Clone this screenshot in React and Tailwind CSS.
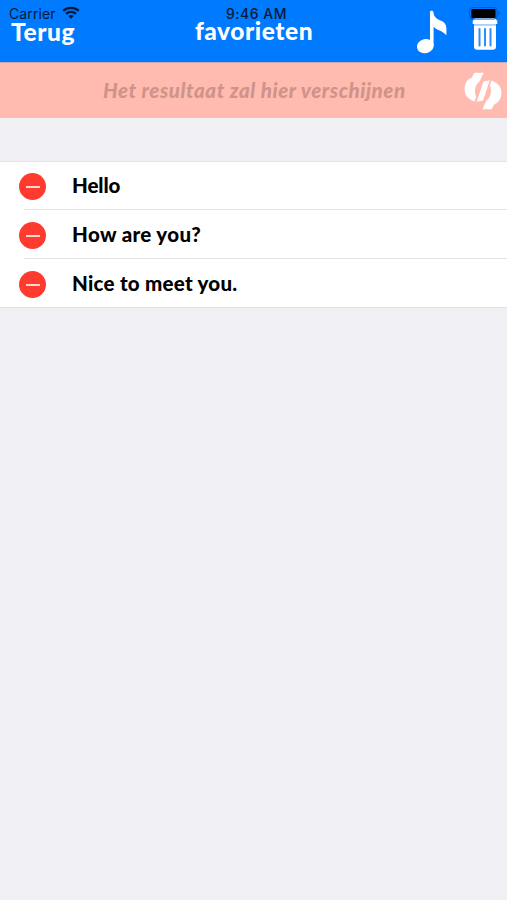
import React from 'react';

const phrases = [
  { text: 'Hello', spacing: 'tracking-[-0.1px]' },
  { text: 'How are you?', spacing: 'tracking-[0.35px]' },
  { text: 'Nice to meet you.', spacing: 'tracking-[0.25px]' },
];

const WifiIcon = () => (
  <svg width="18" height="13" viewBox="0 0 18 13" fill="none" stroke="#051a38" strokeWidth="2.3">
    <path d="M1.2 4.8C5.5 0.8 12.5 0.8 16.8 4.8" />
    <path d="M4 7.8C6.8 5.2 11.2 5.2 14 7.8" />
    <path d="M6.3 10C7.8 8.6 10.2 8.6 11.7 10L9 12.8Z" fill="#051a38" stroke="none" />
  </svg>
);

const BatteryIcon = () => (
  <svg width="32" height="13" viewBox="0 0 32 13">
    <rect x="0.5" y="0.5" width="27.5" height="11.5" rx="3" fill="none" stroke="#0559b5" />
    <rect x="2.3" y="2" width="24.2" height="9" rx="1" fill="#000" />
    <path d="M29.5 4.3C31 5 31 7.8 29.5 8.5Z" fill="#0559b5" />
  </svg>
);

const NoteIcon = () => (
  <svg width="32" height="44" viewBox="0 0 32 44" fill="#fff">
    <ellipse cx="9.3" cy="36.2" rx="8.4" ry="7" transform="rotate(-12 9.3 36.2)" />
    <path d="M14 2C14 0.3 17 0.3 17.4 2C18 7 20.4 9 25 10.8C30 13 31 15.5 30.3 25.6C27.6 21 22.4 21 17.6 17V36H14Z" />
  </svg>
);

const TrashIcon = () => (
  <svg width="26" height="34" viewBox="0 0 26 34">
    <path d="M3 1H23L25.3 4V7H0.7V4Z" fill="#fff" />
    <path d="M2 8.3H24V29.5Q24 32.8 20.7 32.8H5.3Q2 32.8 2 29.5Z" fill="#fff" />
    <path d="M2 7.6H24" stroke="#a5cfff" strokeWidth="1.2" />
    <path d="M7.5 12V28.5M13 12V28.5M18.5 12V28.5" stroke="#2b90ff" strokeWidth="2" strokeLinecap="round" />
  </svg>
);

const RefreshIcon = () => (
  <svg width="38" height="38" viewBox="0 0 38 38" fill="#fff">
    <path d="M10.5 0.8H19.6L15.5 9.5C11 13 10 18.5 12 25L10.5 29.5C3.5 27 0.5 22.5 0.6 17C0.8 10.8 3.5 7.4 7.6 5.8Z" />
    <path d="M27.5 37.2H18.4L22.5 28.5C27 25 28 19.5 26 13L27.5 8.5C34.5 11 37.5 15.5 37.4 21C37.2 27.2 34.5 30.6 30.4 32.2Z" />
    <path d="M19.5 9.4L25.8 8.2L19 28.6L12.6 29.8Z" />
  </svg>
);

const PhraseRow = ({ text, spacing }) => (
  <li className="group first:-mt-px">
    <div className="flex h-12 items-center pt-[3px] pl-[19px]">
      <span className="flex h-[27px] w-[27px] shrink-0 items-center justify-center rounded-full bg-[#ff3b30]">
        <span className="h-0.5 w-3.5 bg-[#ffd5d0]"></span>
      </span>
      <span className={`ml-[26px] pb-[3px] text-[20.5px] leading-6 font-black whitespace-nowrap text-black ${spacing}`}>{text}</span>
    </div>
    <div className="ml-6 h-px bg-[#e2e2e5] group-last:hidden"></div>
  </li>
);

const App = () => {
  return (
    <div className="h-[900px] w-[507px] overflow-hidden bg-[#efeff4] font-['Lato','Open_Sans',sans-serif]">
      <header className="relative h-[62px] bg-[#007aff]">
        <div className="grid h-[62px] grid-cols-3 items-start text-[24.5px] leading-7 font-black text-white">
          <span className="pt-[18px] pl-[11px] tracking-[0.6px]">Terug</span>
          <h1 className="pt-[17px] pl-px text-center tracking-[0.55px]">favorieten</h1>
          <div className="flex justify-end gap-6 pt-2.5 pr-[9px]">
            <NoteIcon />
            <div className="pt-[7px]"><TrashIcon /></div>
          </div>
        </div>

        {/* Status bar */}
        <div className="absolute inset-x-0 top-[6px] grid grid-cols-3 items-start font-['Inter',sans-serif] text-[14px] leading-4 text-[#051a38]">
          <div className="flex gap-1.5 pl-[9px]">
            <span className="tracking-[0.1px]">Carrier</span>
            <WifiIcon />
          </div>
          <span className="pl-1.5 text-center font-medium tracking-[0.5px]">9:46 AM</span>
          <div className="flex justify-end pt-px pr-[6px]">
            <BatteryIcon />
          </div>
        </div>
      </header>

      <section className="flex h-14 items-center border-t border-[#c8a9b7] bg-[#ffbbb0] pr-[5px]">
        <p className="flex-1 pb-0.5 pl-[103px] text-[20.5px] leading-6 font-black tracking-[0.55px] whitespace-nowrap text-[#cf9389] italic">
          Het resultaat zal hier verschijnen
        </p>
        <RefreshIcon />
      </section>

      <ul className="mt-[43px] border-y border-[#e3e3e7] bg-white">
        {phrases.map((phrase) => (
          <PhraseRow key={phrase.text} {...phrase} />
        ))}
      </ul>
    </div>
  );
};

export default App;
